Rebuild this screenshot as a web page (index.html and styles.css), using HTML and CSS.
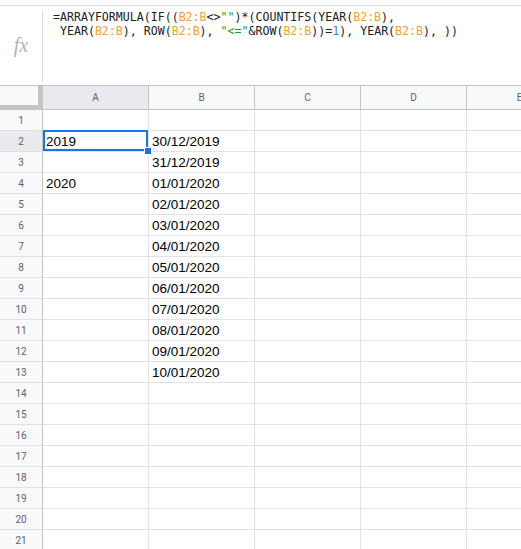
FILE: index.html
```html
<!DOCTYPE html>
<html>
<head>
<meta charset="utf-8">
<link rel="stylesheet" href="styles.css">
</head>
<body>
<div class="topline"></div>
<div class="formulabar">
  <div class="fx">fx</div>
  <div class="divider"></div>
  <div class="formula"><div class="fline">=ARRAYFORMULA(IF((<span class="rng">B2:B</span>&lt;&gt;<span class="str">""</span>)*(COUNTIFS(YEAR(<span class="rng">B2:B</span>),</div><div class="fline"> YEAR(<span class="rng">B2:B</span>), ROW(<span class="rng">B2:B</span>), <span class="str">"&lt;="</span>&amp;ROW(<span class="rng">B2:B</span>))=<span class="num">1</span>), YEAR(<span class="rng">B2:B</span>), ))</div></div>
</div>
<div class="grid">
  <div class="corner"></div><div class="colh sel">A</div><div class="colh">B</div><div class="colh">C</div><div class="colh">D</div><div class="colh">E</div>
  <div class="rowh">1</div><div class="cell"></div><div class="cell"></div><div class="cell"></div><div class="cell"></div><div class="cell"></div>
  <div class="rowh sel">2</div><div class="cell active">2019<span class="handle"></span></div><div class="cell">30/12/2019</div><div class="cell"></div><div class="cell"></div><div class="cell"></div>
  <div class="rowh">3</div><div class="cell"></div><div class="cell">31/12/2019</div><div class="cell"></div><div class="cell"></div><div class="cell"></div>
  <div class="rowh">4</div><div class="cell">2020</div><div class="cell">01/01/2020</div><div class="cell"></div><div class="cell"></div><div class="cell"></div>
  <div class="rowh">5</div><div class="cell"></div><div class="cell">02/01/2020</div><div class="cell"></div><div class="cell"></div><div class="cell"></div>
  <div class="rowh">6</div><div class="cell"></div><div class="cell">03/01/2020</div><div class="cell"></div><div class="cell"></div><div class="cell"></div>
  <div class="rowh">7</div><div class="cell"></div><div class="cell">04/01/2020</div><div class="cell"></div><div class="cell"></div><div class="cell"></div>
  <div class="rowh">8</div><div class="cell"></div><div class="cell">05/01/2020</div><div class="cell"></div><div class="cell"></div><div class="cell"></div>
  <div class="rowh">9</div><div class="cell"></div><div class="cell">06/01/2020</div><div class="cell"></div><div class="cell"></div><div class="cell"></div>
  <div class="rowh">10</div><div class="cell"></div><div class="cell">07/01/2020</div><div class="cell"></div><div class="cell"></div><div class="cell"></div>
  <div class="rowh">11</div><div class="cell"></div><div class="cell">08/01/2020</div><div class="cell"></div><div class="cell"></div><div class="cell"></div>
  <div class="rowh">12</div><div class="cell"></div><div class="cell">09/01/2020</div><div class="cell"></div><div class="cell"></div><div class="cell"></div>
  <div class="rowh">13</div><div class="cell"></div><div class="cell">10/01/2020</div><div class="cell"></div><div class="cell"></div><div class="cell"></div>
  <div class="rowh">14</div><div class="cell"></div><div class="cell"></div><div class="cell"></div><div class="cell"></div><div class="cell"></div>
  <div class="rowh">15</div><div class="cell"></div><div class="cell"></div><div class="cell"></div><div class="cell"></div><div class="cell"></div>
  <div class="rowh">16</div><div class="cell"></div><div class="cell"></div><div class="cell"></div><div class="cell"></div><div class="cell"></div>
  <div class="rowh">17</div><div class="cell"></div><div class="cell"></div><div class="cell"></div><div class="cell"></div><div class="cell"></div>
  <div class="rowh">18</div><div class="cell"></div><div class="cell"></div><div class="cell"></div><div class="cell"></div><div class="cell"></div>
  <div class="rowh">19</div><div class="cell"></div><div class="cell"></div><div class="cell"></div><div class="cell"></div><div class="cell"></div>
  <div class="rowh">20</div><div class="cell"></div><div class="cell"></div><div class="cell"></div><div class="cell"></div><div class="cell"></div>
  <div class="rowh">21</div><div class="cell"></div><div class="cell"></div><div class="cell"></div><div class="cell"></div><div class="cell"></div>
</div>
</body>
</html>
```
FILE: styles.css
```css
html, body {
  margin: 0;
  padding: 0;
  background: #ffffff;
  overflow: hidden;
  width: 521px;
  height: 549px;
}

.topline {
  height: 5px;
  border-bottom: 1px solid #e1e1e1;
}

.formulabar {
  display: flex;
  height: 79px;
}

.fx {
  width: 42px;
  display: flex;
  align-items: center;
  justify-content: center;
  font-family: "Liberation Serif", "DejaVu Serif", serif;
  font-style: italic;
  font-size: 20px;
  color: #b4b4b4;
  padding-top: 0;
}

.divider {
  width: 1px;
  background: #dadce0;
  margin: 4px 0 3px;
}

.formula {
  padding: 5px 0 0 10px;
  font-family: "DejaVu Sans Mono", "Liberation Mono", monospace;
  font-size: 11.6px;
  line-height: 13.5px;
  color: #202124;
  white-space: pre;
}

.rng { color: #f6a035; }
.str { color: #1e9b3c; }
.num { color: #3d7fd6; }

.grid {
  display: grid;
  grid-template-columns: 43px repeat(5, 106px);
  grid-template-rows: 24px;
  grid-auto-rows: 21px;
  width: 521px;
  overflow: hidden;
  border-top: 1px solid #c4c4c4;
}

.corner {
  box-sizing: border-box;
  background: #f8f9fa;
  border-right: 5px solid #c4c4c4;
  border-bottom: 5px solid #c4c4c4;
}

.colh {
  box-sizing: border-box;
  background: #f8f9fa;
  border-right: 1px solid #c4c4c4;
  border-bottom: 1px solid #c4c4c4;
  display: flex;
  align-items: center;
  justify-content: center;
  font-family: Roboto, "Liberation Sans", sans-serif;
  font-size: 10px;
  color: #5f6368;
}

.colh.sel, .rowh.sel {
  background: #e8eaed;
}

.rowh {
  box-sizing: border-box;
  background: #f8f9fa;
  border-right: 1px solid #c4c4c4;
  border-bottom: 1px solid #e2e2e3;
  display: flex;
  align-items: center;
  justify-content: center;
  font-family: Roboto, "Liberation Sans", sans-serif;
  font-size: 10px;
  color: #5f6368;
}

.cell {
  box-sizing: border-box;
  border-right: 1px solid #e2e2e3;
  border-bottom: 1px solid #e2e2e3;
  display: flex;
  align-items: flex-end;
  padding: 0 3px 1px;
  font-family: "Liberation Sans", Arial, sans-serif;
  font-size: 13.5px;
  line-height: 16px;
  color: #000000;
  white-space: nowrap;
  overflow: visible;
}

.cell.active {
  position: relative;
}

.cell.active::after {
  content: "";
  position: absolute;
  top: -1px;
  left: 0;
  right: 0;
  bottom: 0;
  border: 2px solid #1a73e8;
  pointer-events: none;
}

.handle {
  position: absolute;
  left: 101px;
  top: 16px;
  width: 6px;
  height: 6px;
  background: #1a73e8;
  border: 1px solid #ffffff;
  z-index: 2;
}
```
